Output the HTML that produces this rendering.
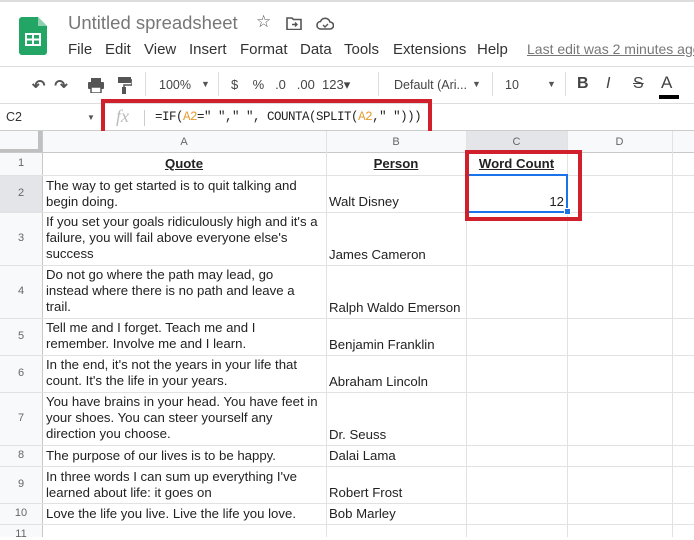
<!DOCTYPE html>
<html><head><style>
*{margin:0;padding:0;box-sizing:border-box}
body{width:694px;height:537px;overflow:hidden;background:#fff;font-family:"Liberation Sans",Arial,sans-serif;position:relative;color:#222}
.a{position:absolute}
.hl{position:absolute;height:1px;background:#e2e2e2}
.vl{position:absolute;width:1px;background:#e2e2e2}
.t{position:absolute;font-size:13.2px;line-height:16px;color:#222;white-space:nowrap}
.rn{position:absolute;left:0;width:42px;text-align:center;font-size:11px;color:#666}
.ch{position:absolute;top:131px;height:22px;line-height:22px;text-align:center;font-size:11px;color:#666}
.menu span{position:absolute;top:0}
</style></head><body>
<div class="a" style="left:0;top:0;width:694px;height:2px;background:#ddd"></div>
<svg class="a" style="left:19px;top:17px" width="28" height="38" viewBox="0 0 28 38"><path d="M3 0h16l9 9v26a3 3 0 0 1-3 3H3a3 3 0 0 1-3-3V3a3 3 0 0 1 3-3z" fill="#23a566"/><path d="M19 0l9 9h-9z" fill="#8ed1b1"/><rect x="6" y="16" width="16" height="13" fill="#fff"/><rect x="8" y="18" width="5" height="3.5" fill="#23a566"/><rect x="15" y="18" width="5" height="3.5" fill="#23a566"/><rect x="8" y="23.5" width="5" height="3.5" fill="#23a566"/><rect x="15" y="23.5" width="5" height="3.5" fill="#23a566"/></svg>
<div class="a" style="left:68px;top:12px;font-size:18.5px;color:#777">Untitled spreadsheet</div>
<div class="a" style="left:256px;top:12px;font-size:17px;color:#555">☆</div>
<svg class="a" style="left:286px;top:16px" width="16" height="14"><path d="M1 2h5l1.5 1.5H15v10H1z" fill="none" stroke="#555" stroke-width="1.6"/><path d="M6 8.5h5M9 6.5l2 2-2 2" stroke="#555" stroke-width="1.4" fill="none"/></svg>
<svg class="a" style="left:316px;top:16px" width="18" height="14"><path d="M4 13h10a3.5 3.5 0 0 0 0-7 5 5 0 0 0-9.5-.5A3.8 3.8 0 0 0 4 13z" fill="none" stroke="#555" stroke-width="1.6"/><path d="M7 9l2 2 3-3" stroke="#555" fill="none" stroke-width="1.4"/></svg>
<div class="a menu" style="left:0;top:41px;font-size:15px;color:#333;white-space:nowrap;width:694px;height:20px"><span style="left:68px">File</span><span style="left:105px">Edit</span><span style="left:144px">View</span><span style="left:189px">Insert</span><span style="left:240px">Format</span><span style="left:300px">Data</span><span style="left:344px">Tools</span><span style="left:393px">Extensions</span><span style="left:477px">Help</span></div>
<div class="a" style="left:527px;top:41px;font-size:14px;color:#777;text-decoration:underline;white-space:nowrap">Last edit was 2 minutes ago</div>
<div class="a" style="left:0;top:66px;width:694px;height:1px;background:#ddd"></div>
<div class="a" style="left:32px;top:76px;font-size:16px;color:#555;white-space:nowrap;font-weight:bold">↶&nbsp; ↷</div>
<svg class="a" style="left:88px;top:78px" width="16" height="15"><rect x="3" y="0" width="10" height="4" fill="#555"/><rect x="0" y="4" width="16" height="7" rx="1" fill="#555"/><rect x="3" y="9" width="10" height="6" fill="#fff" stroke="#555" stroke-width="1.5"/></svg>
<svg class="a" style="left:118px;top:77px" width="14" height="17"><rect x="0" y="0" width="13" height="6" fill="#555"/><path d="M13 3h1v5H6v3" stroke="#555" fill="none" stroke-width="1.5"/><rect x="4" y="10" width="4" height="7" fill="#555"/></svg>
<div class="a" style="left:145px;top:72px;width:1px;height:24px;background:#ddd"></div>
<div class="a" style="left:159px;top:78px;font-size:12.5px;color:#444">100%</div>
<div class="a" style="left:201px;top:79px;font-size:9px;color:#555">▼</div>
<div class="a" style="left:218px;top:72px;width:1px;height:24px;background:#ddd"></div>
<div class="a" style="left:231px;top:77px;font-size:13px;color:#444;white-space:nowrap">$ &nbsp;&nbsp; %&nbsp;&nbsp; .0&nbsp;&nbsp; .00&nbsp; 123▾</div>
<div class="a" style="left:378px;top:72px;width:1px;height:24px;background:#ddd"></div>
<div class="a" style="left:394px;top:78px;font-size:12.5px;color:#444">Default (Ari...</div>
<div class="a" style="left:472px;top:79px;font-size:9px;color:#555">▼</div>
<div class="a" style="left:492px;top:72px;width:1px;height:24px;background:#ddd"></div>
<div class="a" style="left:505px;top:78px;font-size:12.5px;color:#444">10</div>
<div class="a" style="left:547px;top:79px;font-size:9px;color:#555">▼</div>
<div class="a" style="left:565px;top:72px;width:1px;height:24px;background:#ddd"></div>
<div class="a" style="left:577px;top:75px;font-size:16px;color:#444;font-weight:bold">B</div>
<div class="a" style="left:606px;top:75px;font-size:16px;color:#444;font-style:italic">I</div>
<div class="a" style="left:633px;top:75px;font-size:16px;color:#444;text-decoration:line-through">S</div>
<div class="a" style="left:661px;top:73px;font-size:17px;color:#444">A</div>
<div class="a" style="left:659px;top:95px;width:20px;height:4px;background:#000"></div>
<div class="a" style="left:0;top:103px;width:694px;height:1px;background:#ddd"></div>
<div class="a" style="left:6px;top:110px;font-size:12.5px;color:#333">C2</div>
<div class="a" style="left:87px;top:113px;font-size:8px;color:#555">▼</div>
<div class="a" style="left:116px;top:106px;font-size:18px;color:#bbb;font-style:italic;font-family:'Liberation Serif',serif">fx</div>
<div class="a" style="left:144px;top:110px;width:1px;height:16px;background:#ccc"></div>
<div class="a" style="left:155px;top:110px;font-size:12.5px;font-family:'Liberation Mono',monospace;color:#222;white-space:nowrap;letter-spacing:-0.5px">=IF(<span style="color:#e69b2f">A2</span>=" "," ", COUNTA(SPLIT(<span style="color:#e69b2f">A2</span>," ")))</div>
<div class="a" style="left:0;top:130px;width:694px;height:1px;background:#ccc"></div>
<div class="a" style="left:101px;top:99px;width:331px;height:38px;border:4px solid #d0202b"></div>
<div class="a" style="left:0;top:131px;width:694px;height:22px;background:#f8f9fa"></div>
<div class="a" style="left:0;top:131px;width:42px;height:22px;background:#f8f9fa;border-right:4px solid #c0c0c0;border-bottom:4px solid #c0c0c0"></div>
<div class="a" style="left:466px;top:131px;width:101px;height:22px;background:#e3e5e8"></div>
<div class="ch" style="left:42px;width:284px">A</div>
<div class="ch" style="left:326px;width:140px">B</div>
<div class="ch" style="left:466px;width:101px">C</div>
<div class="ch" style="left:567px;width:105px">D</div>
<div class="a" style="left:0;top:153px;width:42px;height:384px;background:#f8f9fa"></div>
<div class="a" style="left:0;top:175px;width:42px;height:37px;background:#e3e5e8"></div>
<div class="a" style="left:0;top:152px;width:694px;height:1px;background:#c8c8c8"></div>
<div class="vl" style="left:42px;top:131px;height:406px;background:#c8c8c8"></div>
<div class="vl" style="left:326px;top:131px;height:406px"></div>
<div class="vl" style="left:466px;top:131px;height:406px"></div>
<div class="vl" style="left:567px;top:131px;height:406px"></div>
<div class="vl" style="left:672px;top:131px;height:406px"></div>
<div class="hl" style="left:0;top:175px;width:694px"></div>
<div class="hl" style="left:0;top:212px;width:694px"></div>
<div class="hl" style="left:0;top:265px;width:694px"></div>
<div class="hl" style="left:0;top:318px;width:694px"></div>
<div class="hl" style="left:0;top:355px;width:694px"></div>
<div class="hl" style="left:0;top:392px;width:694px"></div>
<div class="hl" style="left:0;top:445px;width:694px"></div>
<div class="hl" style="left:0;top:466px;width:694px"></div>
<div class="hl" style="left:0;top:503px;width:694px"></div>
<div class="hl" style="left:0;top:524px;width:694px"></div>
<div class="rn" style="top:157px">1</div>
<div class="rn" style="top:187px">2</div>
<div class="rn" style="top:232px">3</div>
<div class="rn" style="top:285px">4</div>
<div class="rn" style="top:330px">5</div>
<div class="rn" style="top:367px">6</div>
<div class="rn" style="top:412px">7</div>
<div class="rn" style="top:449px">8</div>
<div class="rn" style="top:478px">9</div>
<div class="rn" style="top:507px">10</div>
<div class="rn" style="top:528px">11</div>
<div class="t" style="left:42px;width:284px;top:156px;text-align:center;font-weight:bold;text-decoration:underline">Quote</div>
<div class="t" style="left:326px;width:140px;top:156px;text-align:center;font-weight:bold;text-decoration:underline">Person</div>
<div class="t" style="left:466px;width:101px;top:156px;text-align:center;font-weight:bold;text-decoration:underline">Word Count</div>
<div class="t" style="left:46px;top:178px">The way to get started is to quit talking and<br>begin doing.</div>
<div class="t" style="left:329px;top:194px">Walt Disney</div>
<div class="t" style="left:46px;top:214px">If you set your goals ridiculously high and it's a<br>failure, you will fail above everyone else's<br>success</div>
<div class="t" style="left:329px;top:247px">James Cameron</div>
<div class="t" style="left:46px;top:267px">Do not go where the path may lead, go<br>instead where there is no path and leave a<br>trail.</div>
<div class="t" style="left:329px;top:300px">Ralph Waldo Emerson</div>
<div class="t" style="left:46px;top:320px">Tell me and I forget. Teach me and I<br>remember. Involve me and I learn.</div>
<div class="t" style="left:329px;top:337px">Benjamin Franklin</div>
<div class="t" style="left:46px;top:357px">In the end, it's not the years in your life that<br>count. It's the life in your years.</div>
<div class="t" style="left:329px;top:374px">Abraham Lincoln</div>
<div class="t" style="left:46px;top:394px">You have brains in your head. You have feet in<br>your shoes. You can steer yourself any<br>direction you choose.</div>
<div class="t" style="left:329px;top:427px">Dr. Seuss</div>
<div class="t" style="left:46px;top:448px">The purpose of our lives is to be happy.</div>
<div class="t" style="left:329px;top:448px">Dalai Lama</div>
<div class="t" style="left:46px;top:469px">In three words I can sum up everything I've<br>learned about life: it goes on</div>
<div class="t" style="left:329px;top:485px">Robert Frost</div>
<div class="t" style="left:46px;top:506px">Love the life you live. Live the life you love.</div>
<div class="t" style="left:329px;top:506px">Bob Marley</div>
<div class="a" style="left:466px;top:174px;width:102px;height:39px;border:2px solid #1a73e8"></div>
<div class="a" style="left:564px;top:208px;width:7px;height:7px;background:#1a73e8;border:1px solid #fff"></div>
<div class="t" style="left:466px;width:98px;top:194px;text-align:right">12</div>
<div class="a" style="left:465px;top:150px;width:117px;height:71px;border:4px solid #d0202b"></div>
</body></html>
